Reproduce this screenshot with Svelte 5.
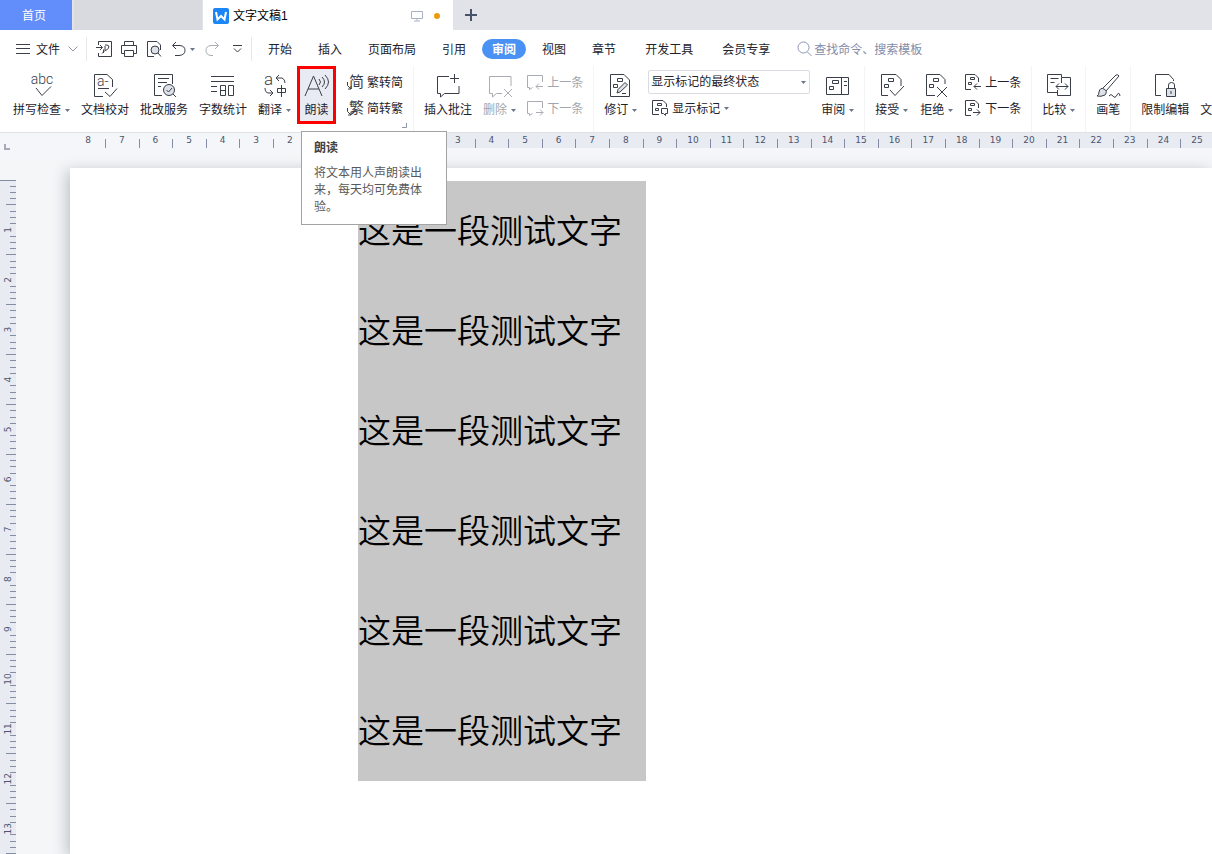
<script lang="ts">
  interface Tool {
    id: string;
    label: string;
    menu?: boolean;
    disabled?: boolean;
  }

  const menuTabs = ['开始', '插入', '页面布局', '引用', '审阅', '视图', '章节'];
  const extraTabs = ['开发工具', '会员专享'];

  const proofTools: Tool[] = [
    { id: 'spell', label: '拼写检查', menu: true },
    { id: 'proof', label: '文档校对' },
    { id: 'service', label: '批改服务' },
    { id: 'count', label: '字数统计' },
    { id: 'translate', label: '翻译', menu: true },
  ];

  const displayModes = ['显示标记的最终状态', '最终状态', '显示标记的原始状态', '原始状态'];

  let activeTab = $state('审阅');
  let displayMode = $state(displayModes[0]);
  let query = $state('');
  let winWidth = $state(1200);
  let winHeight = $state(800);

  const paragraphs = Array(6).fill('这是一段测试文字');

  // horizontal ruler: zero sits on the left text margin
  const unit = 33.6;
  const origin = 357;
  const hMarks = $derived(Array.from({ length: Math.floor((winWidth - origin - 8) / unit) + 9 }, (_, i) => i - 8));

  // vertical ruler: eight divisions per unit
  const vUnit = 49.9;
  const vMarks = $derived(Array.from({ length: Math.floor((winHeight - 190) / vUnit) }, (_, i) => i + 1));
  const vTicks = $derived(
    Array.from({ length: (vMarks.length + 1) * 8 }, (_, i) => i).filter((i) => i === 0 || i % 8 !== 0)
  );
</script>

<svelte:window bind:innerWidth={winWidth} bind:innerHeight={winHeight} />

{#snippet caret()}
  <svg class="caret" width="5" height="3" viewBox="0 0 5 3"><path d="M0 0h5L2.500 3z" /></svg>
{/snippet}

{#snippet icon(id: string)}
  <svg class="icon" width="24" height="24" viewBox="0 0 24 24">
    {#if id === 'spell'}
      <text x="12" y="10" font-size="14" text-anchor="middle">abc</text>
      <path d="M6 14l6 7.500 9-9" />
    {:else if id === 'proof'}
      <path d="M10 22.500H1.500V.5H14l5.500 5V13M5 14.500h11M12 18l5 4.500 7-8" />
      <text x="4" y="12" font-size="14">a-</text>
    {:else if id === 'service'}
      <path d="M10 21.500H2.500V.5h18V10M6 4.500h11M6 8.500h9M6 12.500h3" />
      <circle class="fill" cx="17" cy="16" r="5.500" />
      <path d="M14.500 16l2 2 3.500-4M21 20l3 3" />
    {:else if id === 'count'}
      <path d="M0 2.500h23M0 7.500h23M0 12.500h6M0 17.500h6M9.500 11.500h5v10h-5zM9.500 16.500h5M17.500 11.500h5v10h-5z" />
    {:else if id === 'translate'}
      <text x="1" y="11" font-size="17">a</text>
      <path d="M16 1l-3 3 3 3M13 4h6q3 1 3 5M2 14q0 5 4 5h4M7 16l3 3-3 3M14.500 14.500h8v4h-8zM18.500 11v12" />
    {:else if id === 'read'}
      <path d="M0 22L8.500 2 17 22M3 15h11M14 5q3 3 0 6M17 3q5 5 0 10M20 1q7 7 0 14" />
    {:else if id === 'addComment'}
      <path d="M13 2.500H1.500v17h3V23l4-3.500h14.500V12M18.500 0v9M14 4.500h9" />
    {:else if id === 'delComment'}
      <path d="M23 12V2.500H1.500v17h3V23l4-3.500H14M16 15l8 8M24 15l-8 8" />
    {:else if id === 'track'}
      <path d="M15 .5H1.500v22h19V6zM8.500 4.500h5v3h-5zM4.500 10.500h4v3h-4z" />
      <path class="fill" d="M8 19l1-3.500L16 8.500l2.500 2.500L11 18z" />
      <path d="M13 19.500h4" />
    {:else if id === 'pane'}
      <path d="M.5 3.500h22v17h-22zM15.500 3.500v17M18 7.500h3M18 11.500h3M6.500 6.500h6v3h-6zM3.500 12.500h4v3h-4z" />
    {:else if id === 'accept'}
      <path d="M8 21.500H1.500V.5H16l5 5V12M8.500 4.500h5v3h-5zM4.500 10.500h4v3h-4zM10 16l5 5.500 9-9.500" />
    {:else if id === 'reject'}
      <path d="M10 21.500H1.500V.5H15l5 5V10M8.500 4.500h5v3h-5zM4.500 10.500h4v3h-4zM12 13l10 10M22 13L12 23" />
    {:else if id === 'compare'}
      <path d="M10 18.500H.5V.500h14V3M3.500 4.500h8M3.500 8.500h4M14.500 3.500h9v18h-13V16M14.500 3.500V9M9 12.500h12M12 9.500l-3 3 3 3M18 9.500l3 3-3 3" />
    {:else if id === 'brush'}
      <path class="fill" d="M1 22q2-1 2-4 1-5 5-3t1 6q-4 2-8 1z" />
      <path d="M7 14L20 1q2-1 3 1L10 17M13 22q2-3 4 0t4-1 3 1" />
    {:else if id === 'lock'}
      <path d="M8 21.500H2.500V.5H16l4.500 5V7M15.500 14v-3q0-2.500 3-2.500t3 2.500v3" />
      <path class="fill" d="M13.500 14.500h9v8h-9z" />
      <path d="M18 17v3" />
    {:else if id === 'certify'}
      <path d="M18 21.500H3.500V.5H16l4.500 5V13M7 8.500h9M7 12.500h9" />
    {/if}
  </svg>
{/snippet}

{#snippet small(id: string)}
  <svg class="icon" width="16" height="16" viewBox="0 0 16 16">
    {#if id === 'simplify'}
      <text class="cjk" x="2" y="13" font-size="15">简</text>
      <path d="M.5 8v3.500L4 15M4 12v3H1" />
    {:else if id === 'complicate'}
      <text class="cjk" x="2" y="13" font-size="15">繁</text>
      <path d="M.5 8v3.500L4 15M4 12v3H1" />
    {:else if id === 'prevComment'}
      <path d="M15.500 8V1.500H.5v12h2v2l3-2M16 12.500H9M12 9.500l-3 3 3 3" />
    {:else if id === 'nextComment'}
      <path d="M15.500 8V1.500H.5v12h2v2l3-2M9 12.500h7M13 9.500l3 3-3 3" />
    {:else if id === 'showMark'}
      <path d="M7 14.500H.5V.5H11L14.500 4v3M5.500 3.500h4v2h-4zM3.500 8.500h3v2h-3zM9.500 8.500h6v5h-2v2l-2-2h-2z" />
    {:else if id === 'prevMark'}
      <path d="M6 15.500H.5V.5H10L13.500 4v4M5.500 3.500h4v2h-4zM3.500 8.500h3v2h-3zM16 12.500H9M12 9.500l-3 3 3 3" />
    {:else if id === 'nextMark'}
      <path d="M6 15.500H.5V.5H10L13.500 4v4M5.500 3.500h4v2h-4zM3.500 8.500h3v2h-3zM8 12.500h7M12 9.500l3 3-3 3" />
    {:else if id === 'pdf'}
      <path d="M2.500 4V.5h13v15h-13V12M0 6.500h6M4 4l2.500 2.500L4 9M7.500 12V8.500M9 4h2q3 .5 1.500 3T9 9.500V5M6 12.500l3-3" />
    {:else if id === 'print'}
      <path d="M3.500 4.500v-4h9v4M3.500 12.500h-3v-8h15v8h-3M3.500 9.500h9v6h-9z" />
    {:else if id === 'preview'}
      <path d="M8 15.500H1.500V.5H11L14.500 4v5M12 12l3 3.500" />
      <circle class="fill" cx="9" cy="9" r="4" />
    {:else if id === 'undo'}
      <path d="M5 1L1.500 4.500 5 8M2 4.500h7q5 .5 5 5t-6 5H4" />
    {:else if id === 'redo'}
      <path d="M11 1l3.500 3.500L11 8M14 4.500H7q-5 .5-5 5t5 5h2" />
    {/if}
  </svg>
{/snippet}

{#snippet tool(t: Tool)}
  <button class="tool" disabled={t.disabled}>
    {@render icon(t.id)}
    <span class="label">{t.label}{#if t.menu}{@render caret()}{/if}</span>
  </button>
{/snippet}

{#snippet rowTool(t: Tool)}
  <button class="row-tool" disabled={t.disabled}>
    {@render small(t.id)}
    <span>{t.label}</span>
    {#if t.menu}{@render caret()}{/if}
  </button>
{/snippet}

<div class="app">
  <header class="doc-tabs">
    <button class="home-tab">首页</button>
    <button class="blank-tab" aria-label="文档"></button>
    <div class="doc-tab">
      <svg width="16" height="16" viewBox="0 0 16 16">
        <rect width="16" height="16" rx="2" fill="#1b86f5" />
        <path d="M3 4l1.500 7.500L8 8l3.500 3.500L13 4" fill="none" stroke="#fff" stroke-width="2" />
      </svg>
      <span class="doc-name">文字文稿1</span>
      <svg width="12" height="12" viewBox="0 0 12 12" fill="none" stroke="#a9b2c3">
        <path d="M.5 1.500h11v7H.5zM6 8.500v2M3 11h6" />
      </svg>
      <i class="unsaved"></i>
    </div>
    <button class="new-tab" aria-label="新建">
      <svg width="12" height="12" viewBox="0 0 12 12"><path d="M6 0v12M0 6h12" stroke="#46536b" stroke-width="2" /></svg>
    </button>
  </header>

  <div class="menu-bar">
    <button class="file">
      <svg class="icon" width="14" height="12" viewBox="0 0 14 12"><path d="M0 1.500h14M0 5.500h14M0 10.500h14" /></svg>
      <span>文件</span>
      <svg class="chevron" width="10" height="6" viewBox="0 0 10 6"><path d="M.5.5L5 5 9.500.5" /></svg>
    </button>
    <div class="quick">
      <button aria-label="输出为PDF">{@render small('pdf')}</button>
      <button aria-label="打印">{@render small('print')}</button>
      <button aria-label="打印预览">{@render small('preview')}</button>
      <button class="undo" aria-label="撤销">{@render small('undo')}{@render caret()}</button>
      <button aria-label="恢复" disabled>{@render small('redo')}</button>
      <button aria-label="更多">
        <svg class="icon" width="9" height="8" viewBox="0 0 9 8"><path d="M0 .5h9M1 3.500l3.500 3.500L8 3.500" /></svg>
      </button>
    </div>
    <nav class="tabs">
      {#each menuTabs as tab}
        <button class="tab" class:active={activeTab === tab} onclick={() => (activeTab = tab)}>{tab}</button>
      {/each}
    </nav>
    <nav class="tabs extra">
      {#each extraTabs as tab}
        <button class="tab" class:active={activeTab === tab} onclick={() => (activeTab = tab)}>{tab}</button>
      {/each}
    </nav>
    <label class="search">
      <svg width="15" height="16" viewBox="0 0 15 16" fill="none" stroke="#8d96b3">
        <circle cx="6.500" cy="6.500" r="5.500" /><path d="M10.500 11l4 4" />
      </svg>
      <input type="text" placeholder="查找命令、搜索模板" aria-label="查找命令、搜索模板" bind:value={query} />
    </label>
  </div>

  <div class="ribbon">
    <div class="group proofing">
      {#each proofTools as t}
        {@render tool(t)}
      {/each}
      <div class="read-wrap">
        <button class="tool read" aria-describedby="read-tip">
          {@render icon('read')}
          <span class="label">朗读</span>
        </button>
        <div class="tip" id="read-tip" role="tooltip">
          <strong>朗读</strong>
          <p>将文本用人声朗读出来，每天均可免费体验。</p>
        </div>
      </div>
      <div class="stack">
        {@render rowTool({ id: 'simplify', label: '繁转简' })}
        {@render rowTool({ id: 'complicate', label: '简转繁' })}
      </div>
      <svg class="launcher" width="5" height="5" viewBox="0 0 5 5"><path d="M0 4.500h4.500V0" /></svg>
    </div>

    <div class="group">
      {@render tool({ id: 'addComment', label: '插入批注' })}
      {@render tool({ id: 'delComment', label: '删除', menu: true, disabled: true })}
      <div class="stack">
        {@render rowTool({ id: 'prevComment', label: '上一条', disabled: true })}
        {@render rowTool({ id: 'nextComment', label: '下一条', disabled: true })}
      </div>
    </div>

    <div class="group tracking">
      {@render tool({ id: 'track', label: '修订', menu: true })}
      <div class="stack">
        <div class="select-wrap">
          <select aria-label="显示状态" bind:value={displayMode}>
            {#each displayModes as m}
              <option value={m}>{m}</option>
            {/each}
          </select>
          {@render caret()}
        </div>
        {@render rowTool({ id: 'showMark', label: '显示标记', menu: true })}
      </div>
      {@render tool({ id: 'pane', label: '审阅', menu: true })}
    </div>

    <div class="group changes">
      {@render tool({ id: 'accept', label: '接受', menu: true })}
      {@render tool({ id: 'reject', label: '拒绝', menu: true })}
      <div class="stack">
        {@render rowTool({ id: 'prevMark', label: '上一条' })}
        {@render rowTool({ id: 'nextMark', label: '下一条' })}
      </div>
    </div>

    <div class="group">{@render tool({ id: 'compare', label: '比较', menu: true })}</div>
    <div class="group">{@render tool({ id: 'brush', label: '画笔' })}</div>
    <div class="group">
      {@render tool({ id: 'lock', label: '限制编辑' })}
      {@render tool({ id: 'certify', label: '文档权限' })}
    </div>
  </div>

  <svg class="h-ruler" width="100%" height="20">
    <rect x={origin} y="0" width="100%" height="15" fill="#e8ebf2" />
    <path class="corner" d="M5 11v5h5" />
    {#each hMarks as m}
      {#if m !== 0}
        <text x={origin + m * unit} y="10">{Math.abs(m)}</text>
      {/if}
      <line x1={Math.round(origin + (m + 0.5) * unit) + 0.5} x2={Math.round(origin + (m + 0.5) * unit) + 0.5} y1="6" y2="15" />
    {/each}
  </svg>

  <main class="workspace">
    <div class="v-ruler">
      <svg width="16" height="100%">
        {#each vTicks as i}
          <line x1={i === 0 ? 0 : i % 8 === 4 ? 6 : 10} x2="16" y1={Math.floor((i * vUnit) / 8) + 0.5} y2={Math.floor((i * vUnit) / 8) + 0.5} />
        {/each}
        {#each vMarks as m}
          <text transform="translate(11 {m * vUnit}) rotate(-90)">{m}</text>
        {/each}
      </svg>
    </div>
    <article class="paper">
      <div class="selection">
        {#each paragraphs as text}
          <p>{text}</p>
        {/each}
      </div>
    </article>
  </main>
</div>

<style>
  :global(body) {
    margin: 0;
  }

  .app {
    display: flex;
    flex-direction: column;
    height: 100vh;
    overflow: hidden;
    background: #f5f6f8;
    color: #1e222b;
    font-family: 'Liberation Sans', 'Noto Sans CJK SC', sans-serif;
    font-size: 12px;
    line-height: 16px;
  }

  button {
    border: 0;
    padding: 0;
    background: transparent;
    color: inherit;
    font: inherit;
    white-space: nowrap;
    cursor: pointer;
  }

  svg {
    display: block;
    flex: none;
  }

  .icon {
    fill: none;
    stroke: #3a3e49;
    overflow: visible;
  }

  .icon text {
    fill: #3a3e49;
    stroke: none;
    font-family: Roboto, sans-serif;
    font-weight: 300;
  }

  .icon .cjk {
    font-family: 'Noto Sans CJK SC', sans-serif;
    font-weight: 400;
  }

  .icon .fill {
    fill: #dde1e8;
  }

  .caret {
    fill: #6b7686;
  }

  button:disabled {
    color: #a3a6ad;
    cursor: default;
  }

  button:disabled .icon {
    stroke: #a9acb3;
  }

  /* document tabs */
  .doc-tabs {
    display: flex;
    flex: none;
    height: 30px;
    background: #e1e3e8;
  }

  .home-tab {
    width: 72px;
    padding: 2px 4px 0 0;
    background: #628efb;
    color: #fff;
  }

  .blank-tab {
    width: 128px;
    margin: 0 1px 0 2px;
    background: #d9dae0;
  }

  .doc-tab {
    display: flex;
    align-items: center;
    box-sizing: border-box;
    width: 250px;
    padding: 2px 13px 0 10px;
    background: #fff;
    color: #000;
  }

  .doc-name {
    flex: 1;
    margin-left: 4px;
  }

  .unsaved {
    width: 6px;
    height: 6px;
    margin-left: 11px;
    border-radius: 50%;
    background: #ee9a0d;
  }

  .new-tab {
    padding: 0 12px;
  }

  /* menu bar */
  .menu-bar {
    display: flex;
    flex: none;
    align-items: center;
    height: 34px;
    padding-top: 2px;
    background: #fff;
  }

  .file,
  .quick {
    display: flex;
    align-items: center;
    height: 24px;
    border-right: 1px solid #e6e8ec;
  }

  .file {
    gap: 6px;
    padding: 0 8px 0 16px;
  }

  .file span {
    padding-top: 2px;
  }

  .chevron {
    margin-left: 2px;
    fill: none;
    stroke: #8f96a3;
  }

  .quick {
    gap: 9px;
    padding: 0 6px 0 9px;
  }

  .quick button {
    display: flex;
    align-items: center;
    justify-content: center;
    gap: 3px;
    min-width: 16px;
  }

  .tabs {
    display: flex;
    gap: 6px;
    margin-left: 6px;
  }

  .extra {
    gap: 9px;
    margin-left: 9px;
  }

  .tab {
    box-sizing: border-box;
    height: 20px;
    padding: 2px 10px 0;
    border-radius: 10px;
  }

  .tab.active {
    background: #4991f2;
    color: #fff;
    font-weight: 700;
  }

  .search {
    display: flex;
    align-items: center;
    gap: 2px;
    margin-left: 17px;
  }

  .search input {
    width: 140px;
    border: 0;
    padding: 2px 0 0;
    outline: 0;
    background: transparent;
    color: #6f7a96;
    font: inherit;
  }

  .search input::placeholder {
    color: #838ca8;
  }

  /* ribbon */
  .ribbon {
    display: flex;
    flex: none;
    height: 66px;
    padding-left: 3px;
    border-bottom: 1px solid #dfe1e5;
    background: #fff;
  }

  .group {
    position: relative;
    display: flex;
    flex: none;
    gap: 1px;
    padding: 0 5px;
    border-right: 1px solid #f3f4f6;
  }

  .changes {
    gap: 2px;
  }

  .tool {
    display: flex;
    flex-direction: column;
    align-items: center;
    gap: 4px;
    box-sizing: border-box;
    height: 58px;
    padding: 8px 5px 0;
  }

  .label {
    display: flex;
    align-items: center;
  }

  .label .caret {
    margin-left: 4px;
  }

  .read-wrap {
    position: relative;
    z-index: 2;
  }

  .read {
    width: 39px;
    padding: 5px 2px 0;
    border: 3px solid #fe0000;
    background: #e8ebf1;
  }

  .stack {
    display: flex;
    flex-direction: column;
    gap: 2px;
    padding: 4px 0 0;
  }

  .proofing .stack {
    margin-left: 5px;
  }

  .row-tool {
    display: flex;
    align-items: center;
    gap: 4px;
    height: 24px;
    padding: 0 5px;
  }

  .row-tool span {
    padding-top: 2px;
  }

  .tracking .row-tool {
    padding-left: 9px;
  }

  .select-wrap {
    position: relative;
    margin: 0 5px;
  }

  .select-wrap select {
    display: block;
    width: 162px;
    height: 24px;
    padding: 0 2px;
    border: 1px solid #d9dce2;
    border-radius: 2px;
    appearance: none;
    background: #fff;
    color: #1e222b;
    font: inherit;
  }

  .select-wrap .caret {
    position: absolute;
    top: 11px;
    right: 4px;
    pointer-events: none;
  }

  .launcher {
    position: absolute;
    right: 6px;
    bottom: 4px;
    fill: none;
    stroke: #8a94a6;
  }

  .tip {
    position: absolute;
    top: 65px;
    left: 4px;
    box-sizing: border-box;
    width: 146px;
    padding: 8px 20px 8px 12px;
    border: 1px solid #a3a3a3;
    background: #fff;
    color: #595959;
    line-height: 17px;
  }

  .tip strong {
    color: #444;
  }

  .tip p {
    margin: 8px 0 0;
  }

  /* rulers */
  .h-ruler {
    background: #f5f6f9;
  }

  .h-ruler text,
  .v-ruler text {
    fill: #4c566e;
    font-family: 'DejaVu Sans', sans-serif;
    font-size: 9px;
    text-anchor: middle;
  }

  .h-ruler line,
  .v-ruler line {
    stroke: #858da5;
  }

  .corner {
    fill: none;
    stroke: #a6abb8;
    stroke-width: 2;
  }

  .workspace {
    display: flex;
    flex: 1;
    min-height: 0;
    padding-top: 15px;
  }

  .v-ruler {
    width: 16px;
    margin-top: 12px;
    overflow: hidden;
    background: #e8ebf2;
  }

  .paper {
    flex: 1;
    margin-left: 54px;
    padding: 13px 0 0 288px;
    background: #fff;
    box-shadow: -3px 3px 14px rgba(60, 66, 78, 0.3);
  }

  .selection {
    width: fit-content;
    padding-right: 24px;
    background: #c7c7c7;
    color: #000;
  }

  .selection p {
    margin: 0;
    padding-bottom: 4px;
    font-family: 'Noto Sans CJK SC', sans-serif;
    font-size: 33px;
    font-weight: 350;
    line-height: 96px;
  }
</style>
